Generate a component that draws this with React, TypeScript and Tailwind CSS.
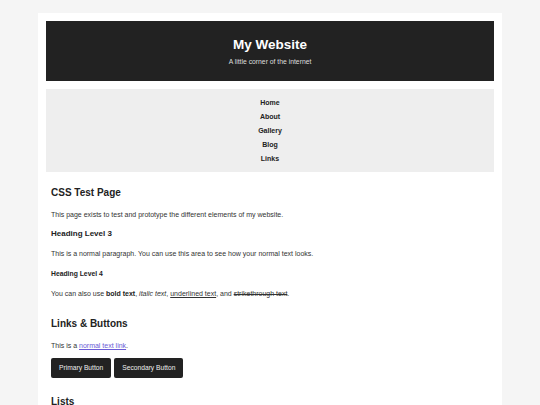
const NAV_LINKS = ['Home', 'About', 'Gallery', 'Blog', 'Links']

function Header() {
  return (
    <header className="h-[60px] bg-[#222222] pt-[16px] text-center">
      <h1 className="text-[13.5px] leading-[16px] font-bold text-white">My Website</h1>
      <p className="mt-[5px] text-[6.8px] leading-[8px] text-[#dddddd]">A little corner of the internet</p>
    </header>
  )
}

function Nav() {
  return (
    <nav className="mt-[8px] h-[83px] bg-[#eeeeee] pt-[7px]">
      <ul className="flex flex-col items-center">
        {NAV_LINKS.map((link) => (
          <li key={link} className="text-[7px] leading-[14px] font-bold text-[#222222]">
            {link}
          </li>
        ))}
      </ul>
    </nav>
  )
}

export default function App() {
  return (
    <div
      className="min-h-screen bg-[#f5f5f5] pt-[13px]"
      style={{ fontFamily: '"Liberation Sans", Arial, sans-serif' }}
    >
      <div className="ml-[38px] w-[464px] bg-white p-[8px] pb-[40px]">
        <Header />
        <Nav />

        <main className="px-[5px] text-[#333333]">
          <h2 className="mt-[15px] text-[10px] leading-[12px] font-bold text-[#222222]">CSS Test Page</h2>
          <p className="mt-[12px] text-[7px] leading-[8px]">
            This page exists to test and prototype the different elements of my website.
          </p>

          <h3 className="mt-[10px] text-[8px] leading-[10px] font-bold text-[#222222]">Heading Level 3</h3>
          <p className="mt-[11px] text-[7px] leading-[8px]">
            This is a normal paragraph. You can use this area to see how your normal text looks.
          </p>

          <h4 className="mt-[12px] text-[6.8px] leading-[8px] font-bold text-[#222222]">Heading Level 4</h4>
          <p className="mt-[12px] text-[7px] leading-[8px]">
            You can also use <strong className="font-bold text-[#222222]">bold text</strong>, <em>italic text</em>,{' '}
            <u>underlined text</u>, and <s>strikethrough text</s>.
          </p>

          <h2 className="mt-[20px] text-[10px] leading-[12px] font-bold text-[#222222]">Links &amp; Buttons</h2>
          <p className="mt-[12px] text-[7px] leading-[8px]">
            This is a{' '}
            <a href="#" className="text-[#6b5bd6] underline">
              normal text link
            </a>
            .
          </p>
          <div className="mt-[8px] flex gap-[3px]">
            <button className="h-[20px] rounded-[2px] bg-[#222222] px-[8px] text-[6.7px] text-[#eeeeee]">
              Primary Button
            </button>
            <button className="h-[20px] rounded-[2px] bg-[#222222] px-[8px] text-[6.7px] text-[#eeeeee]">
              Secondary Button
            </button>
          </div>

          <h2 className="mt-[18px] text-[10px] leading-[12px] font-bold text-[#222222]">Lists</h2>
        </main>
      </div>
    </div>
  )
}
